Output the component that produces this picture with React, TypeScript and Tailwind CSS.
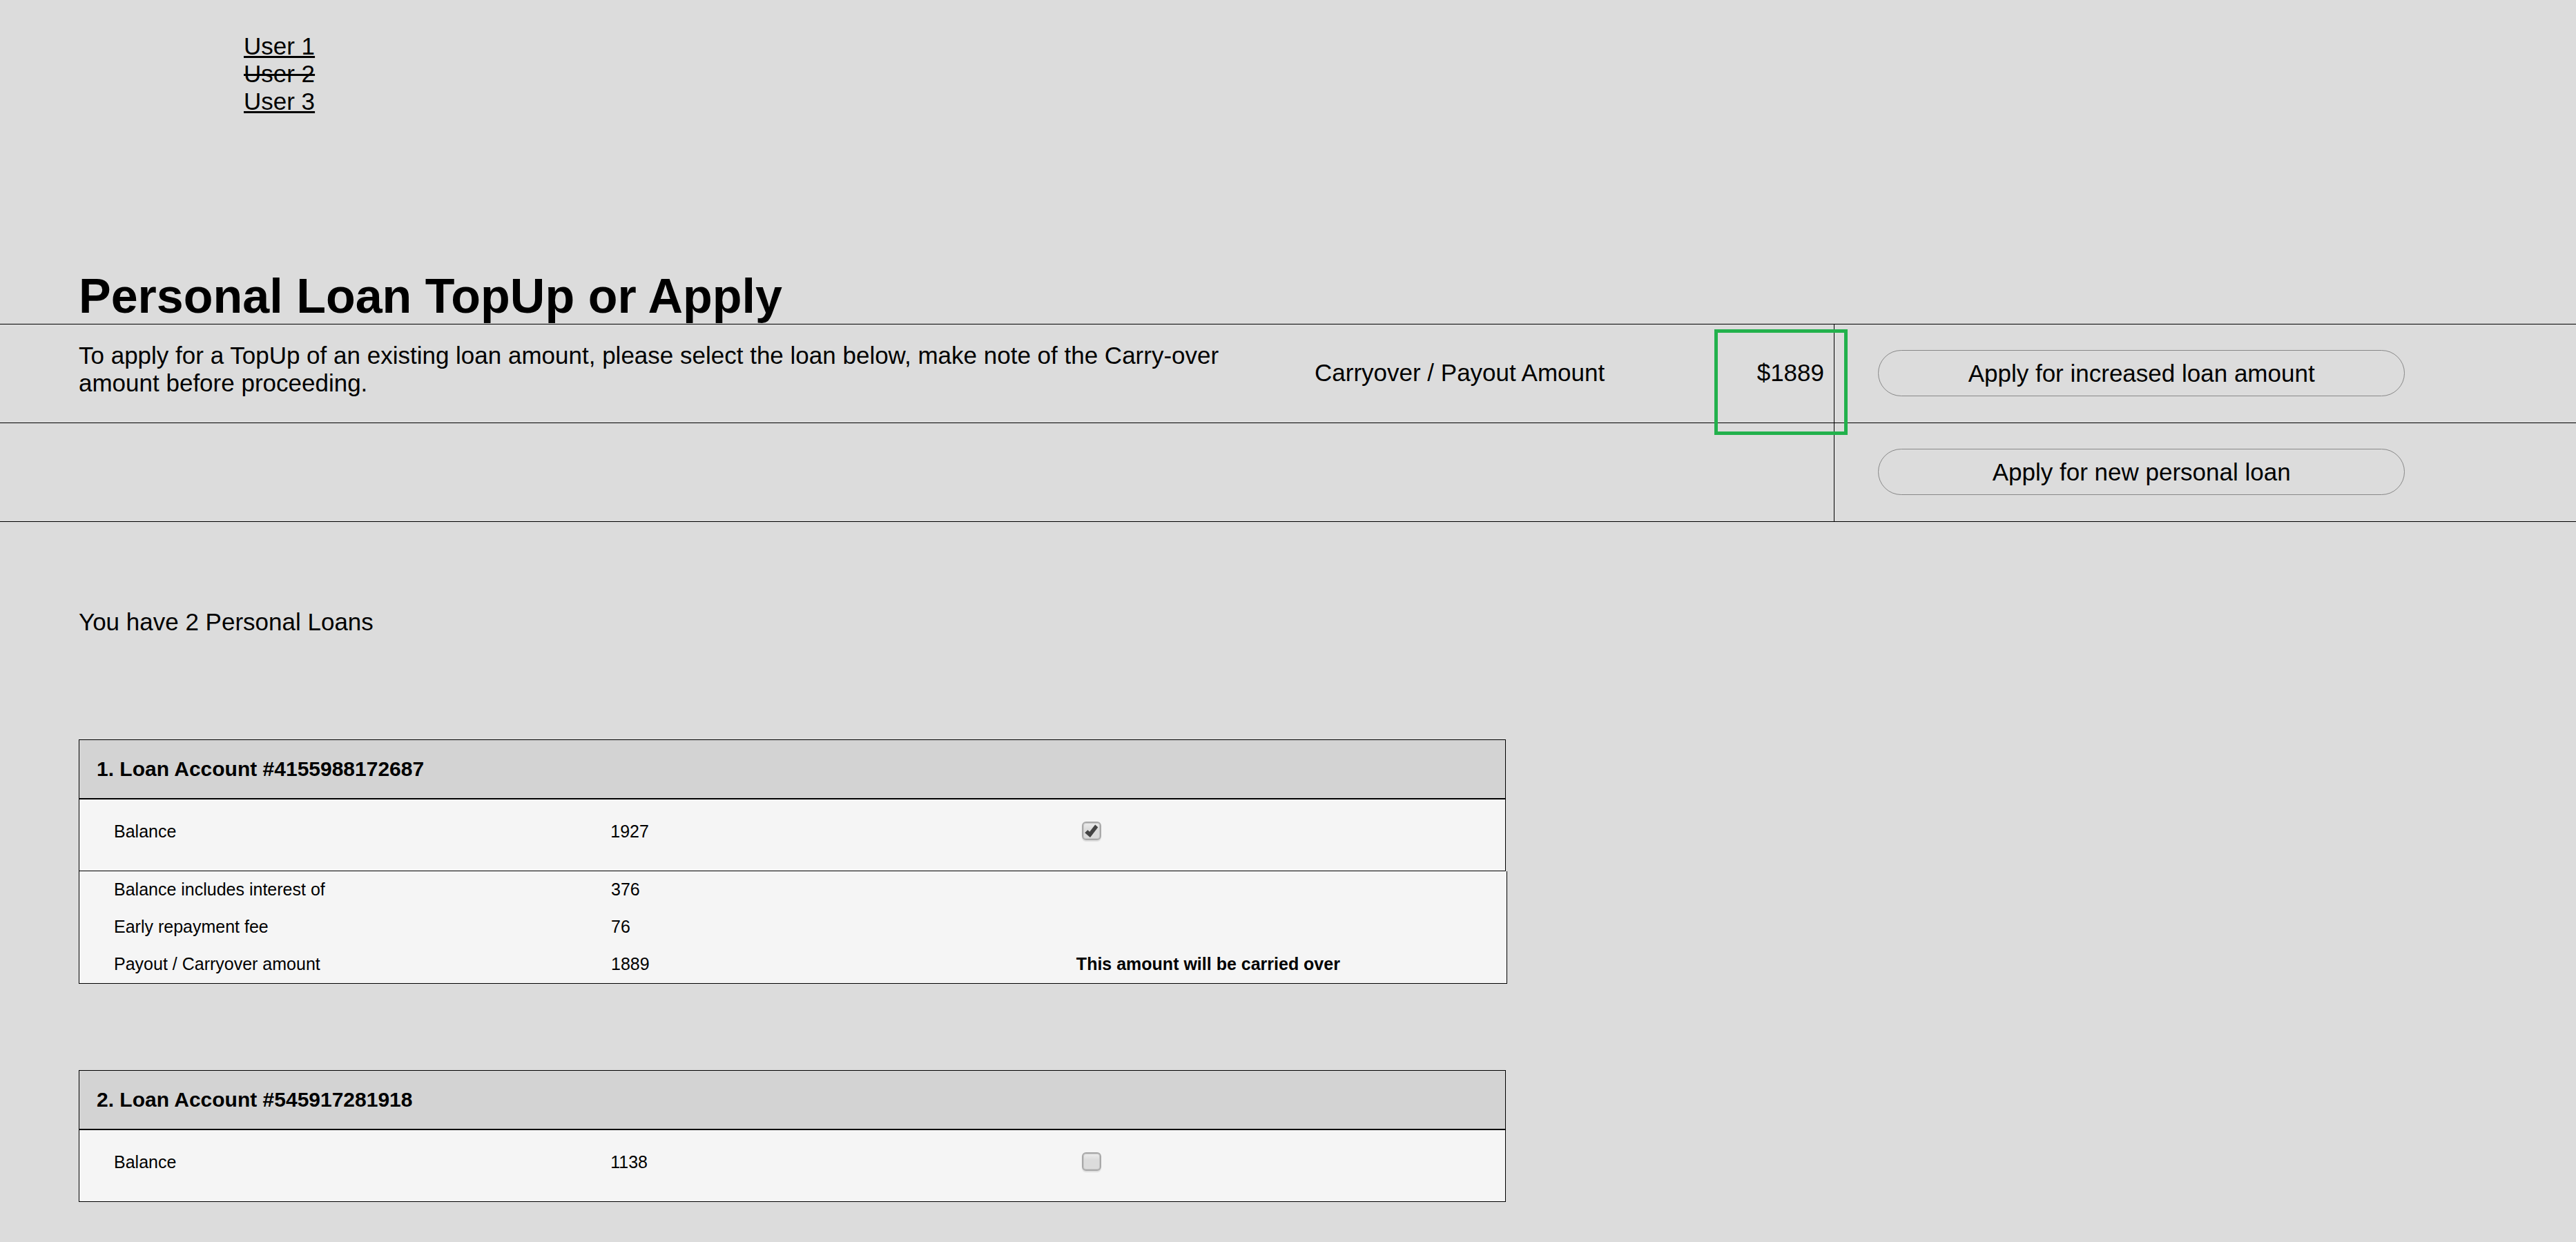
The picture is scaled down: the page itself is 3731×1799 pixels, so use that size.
import { useState } from "react";

type Detail = { label: string; value: number; note?: string };
type Loan = {
  id: string;
  account: string;
  balance: number;
  details: Detail[];
};

const loans: Loan[] = [
  {
    id: "loan-1",
    account: "4155988172687",
    balance: 1927,
    details: [
      { label: "Balance includes interest of", value: 376 },
      { label: "Early repayment fee", value: 76 },
      {
        label: "Payout / Carryover amount",
        value: 1889,
        note: "This amount will be carried over",
      },
    ],
  },
  { id: "loan-2", account: "545917281918", balance: 1138, details: [] },
];

function LoanCheckbox({
  id,
  checked,
  onChange,
}: {
  id: string;
  checked: boolean;
  onChange: () => void;
}) {
  return (
    <span className="relative ml-[10px] block h-[27px] w-[28px]">
      <input
        id={id}
        type="checkbox"
        checked={checked}
        onChange={onChange}
        className="peer block h-[27px] w-[28px] appearance-none rounded-[6px] border-2 border-[#a9a9a9] bg-linear-to-b from-[#ededed] to-[#dcdcdc] to-40% shadow-[0_2px_1px_#dedede,inset_0_0_0_1px_#c8c8c8]"
      />
      <svg
        viewBox="0 0 28 27"
        aria-hidden="true"
        className="pointer-events-none absolute inset-0 hidden h-[27px] w-[28px] peer-checked:block"
      >
        <path d="M4.2 16.3 8.4 12.2 11.2 14.8 19.2 4.6 23.3 8.2 12 23Z" fill="#444" />
      </svg>
    </span>
  );
}

function Columns() {
  return (
    <colgroup>
      <col className="w-[37.25%]" />
      <col className="w-[32.6%]" />
      <col />
    </colgroup>
  );
}

function LoanCard({
  loan,
  index,
  selected,
  onToggle,
}: {
  loan: Loan;
  index: number;
  selected: boolean;
  onToggle: () => void;
}) {
  return (
    <section className="mb-[125px] ml-[114px] text-[25px]/[28px]">
      <div className="w-[57.15%] border border-black bg-[#f5f5f5]">
        <table className="w-full table-fixed border-separate border-spacing-0">
          <Columns />
          <thead>
            <tr>
              <th
                colSpan={3}
                className="border-b-2 border-black bg-[#d3d3d3] px-[25px] py-[25px] text-left text-[30px]/[34px] font-bold"
              >
                {index + 1}. Loan Account #{loan.account}
              </th>
            </tr>
          </thead>
          <tbody>
            <tr className="align-top">
              <td className="pt-8 pb-[43px] pl-[50px]">
                <label htmlFor={loan.id}>Balance</label>
              </td>
              <td className="pt-8 pb-[43px]">{loan.balance}</td>
              <td className="pt-8 pb-[43px]">
                <LoanCheckbox id={loan.id} checked={selected} onChange={onToggle} />
              </td>
            </tr>
          </tbody>
        </table>
      </div>
      {selected && loan.details.length > 0 && (
        <div className="w-[calc(57.15%+2px)] border border-t-0 border-black bg-[#f5f5f5]">
          <table className="w-full table-fixed border-separate border-spacing-0">
            <Columns />
            <tbody>
              {loan.details.map((d) => (
                <tr key={d.label} className="align-top">
                  <td className="pt-3 pb-[14px] pl-[50px]">{d.label}</td>
                  <td className="pt-3 pb-[14px]">{d.value}</td>
                  <td className="pt-3 pb-[14px] font-bold">{d.note}</td>
                </tr>
              ))}
            </tbody>
          </table>
        </div>
      )}
    </section>
  );
}

function PillButton({ children }: { children: string }) {
  return (
    <button
      type="button"
      className="block w-[75.5%] rounded-full border border-[#888] px-4 pt-[13px] pb-3 text-center"
    >
      {children}
    </button>
  );
}

export default function App() {
  const [selected, setSelected] = useState<string[]>(["loan-1"]);

  const toggle = (id: string) =>
    setSelected((s) => (s.includes(id) ? s.filter((x) => x !== id) : [...s, id]));

  const payout = loans
    .filter((l) => selected.includes(l.id))
    .reduce((sum, l) => sum + (l.details.find((d) => d.note)?.value ?? 0), 0);

  return (
    <main className="min-h-screen overflow-hidden bg-[#dcdcdc] pt-[47px] font-['Liberation_Sans',Arial,sans-serif] text-[35px]/[40px] text-black">
      <nav className="ml-[353px] flex flex-col items-start">
        <a href="#user-1" className="underline decoration-3">
          User 1
        </a>
        <a href="#user-2" className="line-through decoration-3">
          User 2
        </a>
        <a href="#user-3" className="underline decoration-3">
          User 3
        </a>
      </nav>

      <h1 className="mt-[222px] ml-[114px] text-[70px]/[80px] font-bold">
        Personal Loan TopUp or Apply
      </h1>

      <div className="border-t border-black">
        <div className="grid grid-cols-[1865fr_791fr_1075fr] border-b border-black">
          <p className="pt-[25px] pl-[114px]">
            To apply for a TopUp of an existing loan amount, please select the loan below, make
            note of the Carry-over amount before proceeding.
          </p>
          <div className="relative flex justify-between pt-[50px] pr-[14px] pl-[39px]">
            <span>Carryover / Payout Amount</span>
            <span>${payout}</span>
            <div className="pointer-events-none absolute top-[7px] -right-5 z-10 h-[153px] w-[193px] border-5 border-[#22b14c]" />
          </div>
          <div className="border-l border-black pt-[37px] pb-[38px] pl-[63px]">
            <PillButton>Apply for increased loan amount</PillButton>
          </div>
        </div>
        <div className="grid grid-cols-[2656fr_1075fr] border-b border-black">
          <div />
          <div className="border-l border-black pt-[37px] pb-[38px] pl-[63px]">
            <PillButton>Apply for new personal loan</PillButton>
          </div>
        </div>
      </div>

      <p className="mt-[125px] mb-[150px] ml-[114px]">You have {loans.length} Personal Loans</p>

      {loans.map((loan, i) => (
        <LoanCard
          key={loan.id}
          loan={loan}
          index={i}
          selected={selected.includes(loan.id)}
          onToggle={() => toggle(loan.id)}
        />
      ))}
    </main>
  );
}
